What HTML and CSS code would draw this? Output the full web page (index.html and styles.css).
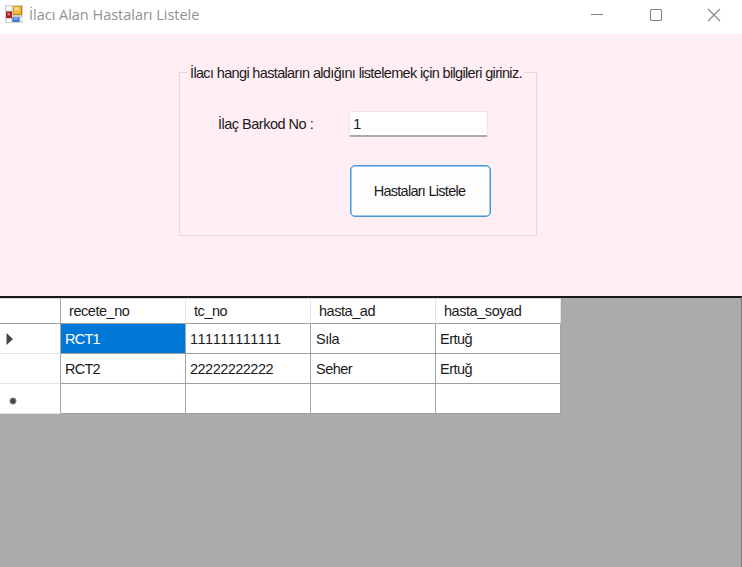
FILE: index.html
```html
<!DOCTYPE html>
<html lang="tr">
<head>
<meta charset="utf-8">
<title>İlacı Alan Hastaları Listele</title>
<link rel="stylesheet" href="styles.css">
</head>
<body>
<div class="window">
  <header class="titlebar">
    <svg class="app-icon" width="18" height="18" viewBox="0 0 18 18">
      <rect width="18" height="18" fill="#d2d2d2"/>
      <path d="M1.5 1.5h5v4h-5zM1.5 14h4.500v3h-4.500zM15.500 12.500h2v4h-2z" fill="#fff"/>
      <rect x="8" y="1" width="9" height="9" fill="#b98412"/>
      <rect x="8.500" y="1.500" width="7.500" height="7.500" fill="#efbd37"/>
      <rect x="9.500" y="2.500" width="4" height="3" fill="#ffe48b"/>
      <rect x="1" y="6.500" width="6" height="6.500" fill="#a92022"/>
      <rect x="2.500" y="8" width="2.500" height="2.500" fill="#e37469"/>
      <rect x="7.500" y="12" width="7" height="5" fill="#3e78d2"/>
      <rect x="9" y="12.500" width="4" height="2" fill="#84b2f4"/>
    </svg>
    <h1 class="title">İlacı Alan Hastaları Listele</h1>
    <div class="controls">
      <svg width="14" height="14" viewBox="0 0 14 14"><path d="M1 6.500h12"/></svg>
      <svg width="14" height="14" viewBox="0 0 14 14"><rect x="1.500" y="1.500" width="11" height="11" rx="1"/></svg>
      <svg width="14" height="14" viewBox="0 0 14 14"><path d="M1 1l12 12M13 1L1 13"/></svg>
    </div>
  </header>
  <main class="form">
    <fieldset class="group">
      <legend class="legend">İlacı hangi hastaların aldığını listelemek için bilgileri giriniz.</legend>
      <div class="field">
        <label class="label" for="barkod">İlaç Barkod No :</label>
        <input class="input" id="barkod" type="text" value="1">
      </div>
      <button class="button" type="button">Hastaları Listele</button>
    </fieldset>
  </main>
  <section class="grid-area">
    <div class="grid">
      <div class="cell corner"></div>
      <div class="cell head">recete_no</div>
      <div class="cell head">tc_no</div>
      <div class="cell head">hasta_ad</div>
      <div class="cell head">hasta_soyad</div>

      <div class="cell row-head"><svg width="8" height="12" viewBox="0 0 8 12"><path d="M1.500 0L8 6l-6.500 6z" fill="#444"/></svg></div>
      <div class="cell code selected">RCT1</div>
      <div class="cell num">111111111111</div>
      <div class="cell">Sıla</div>
      <div class="cell name">Ertuğ</div>

      <div class="cell row-head"></div>
      <div class="cell code">RCT2</div>
      <div class="cell num">22222222222</div>
      <div class="cell">Seher</div>
      <div class="cell name">Ertuğ</div>

      <div class="cell row-head new"><svg width="8" height="8" viewBox="0 0 8 8"><path d="M4 .3v7.400M.3 4h7.400M1.300 1.300l5.400 5.400M6.700 1.300L1.300 6.700" stroke="#666" stroke-width="1.200"/><circle cx="4" cy="4" r="2.700" fill="#444"/></svg></div>
      <div class="cell"></div>
      <div class="cell"></div>
      <div class="cell"></div>
      <div class="cell"></div>
    </div>
  </section>
</div>
</body>
</html>
```
FILE: styles.css
```css
* { box-sizing: border-box; }
body { margin: 0; font-family: "Liberation Sans", Arial, sans-serif; font-size: 14.5px; font-kerning: none; color: #1c1a20; }
.window { width: 742px; height: 567px; display: flex; flex-direction: column; overflow: hidden; background: #ababab; }

.titlebar { height: 34px; flex: none; display: flex; align-items: center; background: #fff; padding: 0 21px 4px 5px; }
.app-icon { flex: none; margin-top: -2px; }
.title { margin: 0 0 0 6px; font: 400 14.5px/20px "Open Sans", "Noto Sans", sans-serif; letter-spacing: -0.02px; color: #929292; white-space: nowrap; }
.controls { margin-left: auto; display: flex; gap: 44.500px; }
.controls svg { fill: none; stroke: #858585; stroke-width: 1.1; }

.form { height: 262px; flex: none; background: #ffeff4; padding: 29px 0 0 179px; }
.group { width: 358px; margin: 0; padding: 0; border: 1px solid #dedadd; min-width: 0; }
.legend { width: 337px; height: 18px; margin-left: 7px; padding: 0 3px; line-height: 20px; letter-spacing: -0.65px; white-space: nowrap; }
.field { display: flex; align-items: center; height: 26px; margin: 30px 0 0 38px; }
.label { width: 131px; letter-spacing: -0.5px; }
.input { width: 139px; height: 26px; border: 1px solid #ebe5e8; border-bottom: 2px solid #aaa; border-radius: 2px; padding: 0 3px; background: #fff; color: #1c1a20; font: 15px "Liberation Sans", Arial, sans-serif; outline: 0; }
.button { display: block; width: 141px; height: 52px; margin: 28px 0 18px 170px; padding: 0 2px 0 0; border: 1px solid #4597db; box-shadow: inset 0 0 0 .5px #4597db; border-radius: 5px; background: #fdfdfd; color: #1c1a20; font: 14.5px "Liberation Sans", Arial, sans-serif; letter-spacing: -0.72px; }

.grid-area { flex: 1; border-top: 2px solid #1d191b; border-right: 1px solid #777; background: #ababab; }
.grid { display: grid; grid-template-columns: 61px repeat(4, 125px); grid-template-rows: 26px repeat(3, 30px); width: 561px; }
.cell { background: #fff; border-right: 1px solid #a5a5a5; border-bottom: 1px solid #a0a0a0; padding: 0 0 0 5px; display: flex; align-items: center; line-height: 18px; letter-spacing: -0.5px; white-space: nowrap; }
.corner, .head { border-top: 1px solid #d8d8d8; }
.head { padding-left: 8px; border-right-color: #e4e4e4; letter-spacing: -0.45px; }
.row-head { border-bottom-color: #e2e2e2; }
.new { padding-left: 9px; padding-top: 4px; }
.code, .num, .name { padding-left: 4px; }
.code { letter-spacing: -0.75px; }
.selected { background: #0078d7; color: #fff; }
.num { letter-spacing: -0.52px; }
```
